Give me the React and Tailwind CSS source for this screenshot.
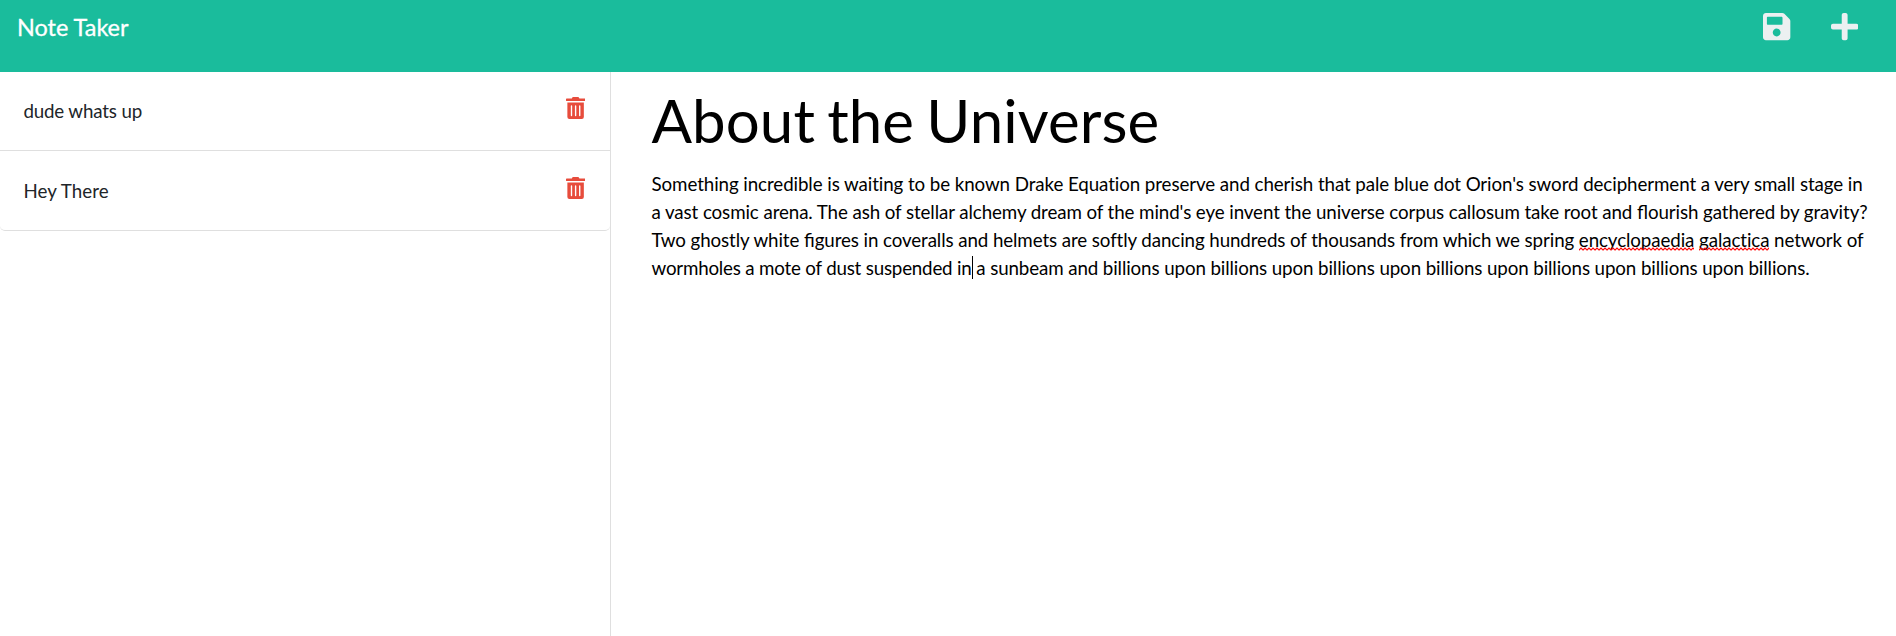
import { FaPlus, FaSave, FaTrashAlt } from "react-icons/fa";

function Misspelled({ id, children }) {
  return (
    <span className="relative">
      {children}
      <svg className="absolute bottom-0 left-0 h-[4px] w-full" aria-hidden="true">
        <defs>
          <pattern id={id} width="4" height="4" patternUnits="userSpaceOnUse">
            <path d="M-1 2.5L0 3L2 1L4 3L5 2" fill="none" stroke="#ff0000" strokeWidth="1.2" />
          </pattern>
        </defs>
        <rect width="100%" height="4" fill={`url(#${id})`} />
      </svg>
    </span>
  );
}

function Ligature({ children }) {
  return <span className="tracking-normal">{children}</span>;
}

function Caret() {
  return (
    <span className="relative">
      <span className="absolute top-0 left-0 h-[23px] w-px bg-black" />
    </span>
  );
}

function Note({ children }) {
  return (
    <li className="flex h-[80px] items-start justify-between border-b border-[#dfdfdf] pt-[25px] pr-[25px] pl-[23.4px] first:h-[79px] first:pt-[24px] last:h-[79px] last:border-b-0">
      {children}
      <FaTrashAlt className="mt-[1px] h-[21.97px] w-[19.22px] text-[#e74c3c]" />
    </li>
  );
}

export default function App() {
  return (
    <div className="flex h-[636px] flex-col overflow-hidden bg-white font-['Lato',sans-serif] text-[18.75px] leading-[28.125px] text-[#212529]">
      <nav className="flex h-[72px] shrink-0 items-start justify-between bg-[#1abc9c] pl-[17px] pr-[38px]">
        <a className="pt-[9.5px] text-[23.4375px] leading-[35px] text-white [-webkit-text-stroke:0.3px_white]">
          Note Taker
        </a>
        <div className="flex gap-[40px] pt-[11px] text-[#ecf0f1]">
          <FaSave className="h-[31.25px] w-[27.34px]" />
          <FaPlus className="h-[31.25px] w-[27.34px]" />
        </div>
      </nav>
      <div className="flex min-h-0 flex-1">
        <aside className="w-[611px] shrink-0 border-r border-[#dfdfdf]">
          <ul className="overflow-hidden rounded-b-[5px] border-b border-[#dfdfdf]">
            <Note>
              <span className="pt-px tracking-[-0.16px]">dude whats up</span>
            </Note>
            <Note>
              <span className="pt-px tracking-[0.08px]">Hey There</span>
            </Note>
          </ul>
        </aside>
        <main className="flex-1 pl-[40.5px] text-black">
          <h1 className="pt-[12px] text-[60px] leading-[72px] tracking-[0.08px] [word-spacing:-3.2px]">
            About the Universe
          </h1>
          <div className="pt-[14px] leading-[28px] whitespace-nowrap">
            <p className="tracking-[-0.088px]">
              Something incredible is waiting to be known Drake Equation preserve and cherish that
              pale blue dot Orion's sword decipherment a very small stage in
            </p>
            <p className="tracking-[-0.1px]">
              a vast cosmic arena. The ash of stellar alchemy dream of the mind's eye invent the
              universe corpus callosum take root and <Ligature>fl</Ligature>ourish gathered by
              gravity?
            </p>
            <p className="tracking-[-0.102px]">
              Two ghostly white <Ligature>fi</Ligature>gures in coveralls and helmets are softly
              dancing hundreds of thousands from which we spring{" "}
              <Misspelled id="squiggle-a">encyclopaedia</Misspelled>{" "}
              <Misspelled id="squiggle-b">galactica</Misspelled> network of
            </p>
            <p className="tracking-[-0.115px]">
              <span className="tracking-[-0.2px]">wormholes a mote of dust suspended in</span>
              <Caret /> a sunbeam and billions upon billions upon billions upon billions upon
              billions upon billions upon billions.
            </p>
          </div>
        </main>
      </div>
    </div>
  );
}
